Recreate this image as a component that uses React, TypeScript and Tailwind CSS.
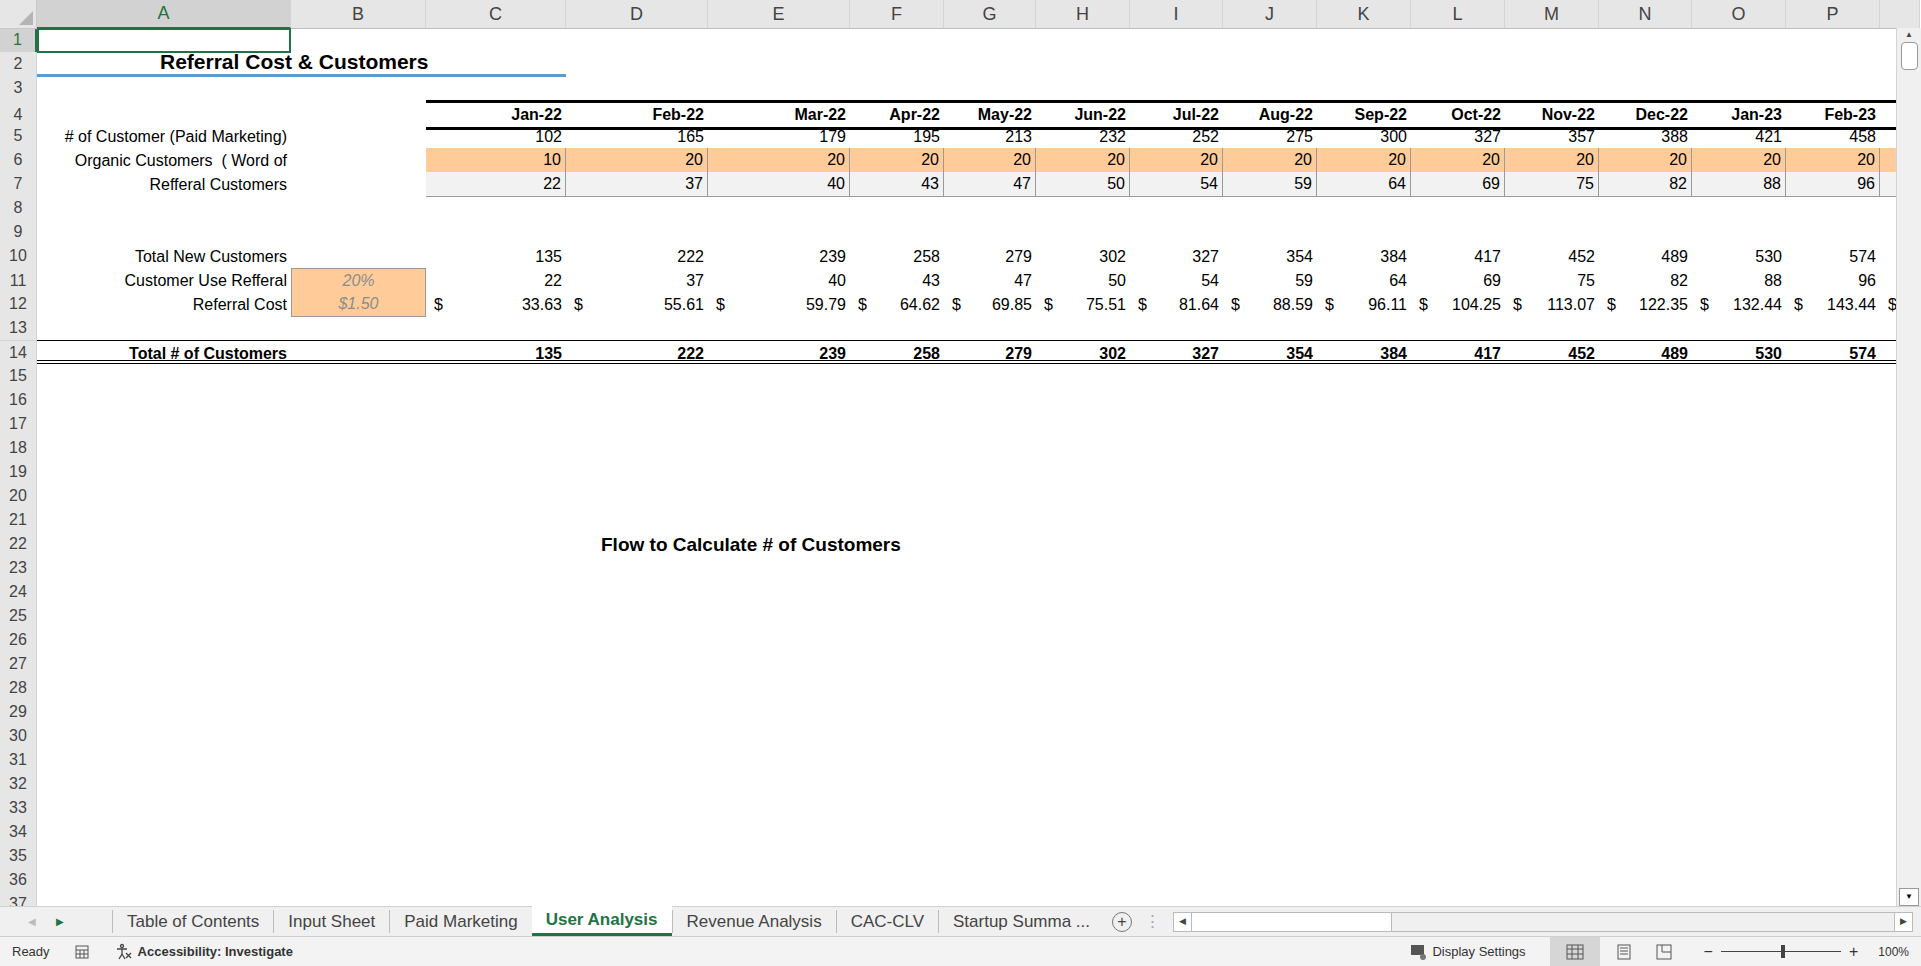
import React from "react";

const cols = ["A", "B", "C", "D", "E", "F", "G", "H", "I", "J", "K", "L", "M", "N", "O", "P", ""];
const template = "37px 254px 135px 140px 142px 142px 94px 92px 94px 93px 94px 94px 94px 94px 93px 94px 94px 40px";

const months = ["Jan-22", "Feb-22", "Mar-22", "Apr-22", "May-22", "Jun-22", "Jul-22", "Aug-22", "Sep-22", "Oct-22", "Nov-22", "Dec-22", "Jan-23", "Feb-23"];
const paid = [102, 165, 179, 195, 213, 232, 252, 275, 300, 327, 357, 388, 421, 458];
const organic = [10, 20, 20, 20, 20, 20, 20, 20, 20, 20, 20, 20, 20, 20];
const referral = [22, 37, 40, 43, 47, 50, 54, 59, 64, 69, 75, 82, 88, 96];
const total = [135, 222, 239, 258, 279, 302, 327, 354, 384, 417, 452, 489, 530, 574];
const cost = ["33.63", "55.61", "59.79", "64.62", "69.85", "75.51", "81.64", "88.59", "96.11", "104.25", "113.07", "122.35", "132.44", "143.44"];

const font = { fontFamily: '"Liberation Sans", Arial, sans-serif' };

function RowHead({ n, sel }: { n: number; sel?: boolean }) {
  return (
    <div
      className={`flex items-center justify-center text-[16px] border-r border-b border-[#d4d4d4] ${
        sel ? "bg-[#d2d2d2] text-[#217346] border-r-2 border-r-[#217346]" : "bg-[#e6e6e6] text-[#444]"
      }`}
    >
      {n}
    </div>
  );
}

function Label({ children, bold }: { children: React.ReactNode; bold?: boolean }) {
  return (
    <div className={`flex items-center justify-end pr-1 whitespace-nowrap ${bold ? "font-bold" : ""}`}>{children}</div>
  );
}

function Empty({ n = 1, cls = "" }: { n?: number; cls?: string }) {
  return (
    <>
      {Array.from({ length: n }).map((_, i) => (
        <div key={i} className={cls} />
      ))}
    </>
  );
}

function Nums({ vals, cls = "", bold }: { vals: (string | number)[]; cls?: string; bold?: boolean }) {
  return (
    <>
      {vals.map((v, i) => (
        <div key={i} className={`flex items-center justify-end pr-1 ${bold ? "font-bold" : ""} ${cls}`}>
          {v}
        </div>
      ))}
    </>
  );
}

function Row({ children, cls = "" }: { children: React.ReactNode; cls?: string }) {
  return (
    <div className={`grid h-[24px] ${cls}`} style={{ gridTemplateColumns: template }}>
      {children}
    </div>
  );
}

export default function App() {
  const rows: React.ReactNode[] = [];
  for (let n = 1; n <= 37; n++) {
    let content: React.ReactNode = <Empty n={17} />;
    if (n === 1)
      content = (
        <>
          <div className="border-2 border-[#217346]" />
          <Empty n={16} />
        </>
      );
    if (n === 2)
      content = (
        <>
          <div className="col-span-3 relative border-b-[3px] border-[#5b9bd5]">
            <span className="absolute left-[123px] -top-[6px] text-[21px] font-bold whitespace-nowrap">Referral Cost &amp; Customers</span>
          </div>
          <Empty n={14} />
        </>
      );
    if (n === 4)
      content = (
        <>
          <Empty n={2} />
          {months.map((m) => (
            <div key={m} className="flex items-end justify-end pr-1 font-bold border-t-[3px] border-b-[3px] border-black">
              {m}
            </div>
          ))}
          <div className="border-t-[3px] border-b-[3px] border-black" />
        </>
      );
    if (n === 5)
      content = (
        <>
          <Label># of Customer (Paid Marketing)</Label>
          <Empty />
          <Nums vals={paid} />
          <Empty />
        </>
      );
    if (n === 6)
      content = (
        <>
          <Label>Organic Customers &nbsp;( Word of</Label>
          <Empty />
          <Nums vals={organic} cls="bg-[#ffcc99] border-r border-b border-[#9a9a9a] first:border-l" />
          <div className="bg-[#ffcc99] border-b border-[#9a9a9a]" />
        </>
      );
    if (n === 7)
      content = (
        <>
          <Label>Refferal Customers</Label>
          <Empty />
          <Nums vals={referral} cls="bg-[#f2f2f2] border-r border-b border-[#9a9a9a]" />
          <div className="bg-[#f2f2f2] border-b border-[#9a9a9a]" />
        </>
      );
    if (n === 10)
      content = (
        <>
          <Label>Total New Customers</Label>
          <Empty />
          <Nums vals={total} />
          <Empty />
        </>
      );
    if (n === 11)
      content = (
        <>
          <Label>Customer Use Refferal</Label>
          <div className="flex items-center justify-center italic text-[#8c8c8c] bg-[#ffcc99] border border-[#9a9a9a]">20%</div>
          <Nums vals={referral} />
          <Empty />
        </>
      );
    if (n === 12)
      content = (
        <>
          <Label>Referral Cost</Label>
          <div className="flex items-center justify-center italic text-[#8c8c8c] bg-[#ffcc99] border border-t-0 border-[#9a9a9a]">$1.50</div>
          {cost.map((c, i) => (
            <div key={i} className="flex items-center justify-between pl-2 pr-1">
              <span>$</span>
              <span>{c}</span>
            </div>
          ))}
          <div className="flex items-center pl-2">$</div>
        </>
      );
    if (n === 14)
      content = (
        <>
          <Label bold>Total # of Customers</Label>
          <div />
          <Nums vals={total} bold />
          <Empty />
        </>
      );
    if (n === 22)
      content = (
        <>
          <Empty n={3} />
          <div className="relative">
            <span className="absolute left-[35px] -top-[1px] text-[19px] font-bold whitespace-nowrap">Flow to Calculate # of Customers</span>
          </div>
          <Empty n={13} />
        </>
      );
    const cls =
      n === 14 ? "border-t border-b-[4px] border-b-black border-t-black [border-bottom-style:double]" : "";
    rows.push(
      <Row key={n} cls={cls}>
        <RowHead n={n} sel={n === 1} />
        {content}
      </Row>
    );
  }

  return (
    <div className="w-[1921px] h-[966px] overflow-hidden bg-white text-[16px] text-black relative" style={font}>
      {/* column headers */}
      <div className="flex">
        <div className="grid h-[28px] flex-1" style={{ gridTemplateColumns: template }}>
          <div className="bg-[#e6e6e6] border-r border-b border-[#c8c8c8] relative">
            <div className="absolute right-[3px] bottom-[3px] w-0 h-0 border-l-[14px] border-l-transparent border-b-[14px] border-b-[#b4b4b4]" />
          </div>
          {cols.map((c, i) => (
            <div
              key={i}
              className={`flex items-center justify-center text-[18px] border-r border-[#d4d4d4] ${
                i === 0 ? "bg-[#d2d2d2] text-[#217346] border-b-2 border-b-[#217346]" : "bg-[#e6e6e6] text-[#444] border-b border-b-[#bdbdbd]"
              }`}
            >
              {c}
            </div>
          ))}
          <div className="bg-[#e6e6e6] border-b border-[#bdbdbd]" />
        </div>
      </div>

      <div className="flex h-[878px]">
        <div className="flex-1 overflow-hidden">{rows}</div>
        <div className="w-[25px] bg-[#f0f0f0] border-l border-[#d4d4d4] flex flex-col items-center">
          <div className="h-[14px] text-[8px] leading-[14px] text-[#444]">▲</div>
          <div className="w-[17px] h-[28px] bg-white border border-[#999] rounded-sm" />
          <div className="flex-1" />
          <div className="w-[20px] h-[18px] bg-white border border-[#999] text-[8px] text-center leading-[16px]">▼</div>
        </div>
      </div>

      {/* sheet tabs */}
      <div className="h-[30px] bg-[#f0f0f0] border-t border-[#d0d0d0] flex items-stretch text-[17px] text-[#444]">
        <div className="w-[112px] flex items-center gap-5 pl-7 text-[10px]">
          <span className="text-[#bbb]">◀</span>
          <span className="text-[#217346]">▶</span>
        </div>
        {["Table of Contents", "Input Sheet", "Paid Marketing", "User Analysis", "Revenue Analysis", "CAC-CLV", "Startup Summa ..."].map((t) => (
          <div
            key={t}
            className={`flex items-center px-[14px] ${
              t === "User Analysis"
                ? "bg-white text-[#217346] font-bold border-b-[3px] border-[#217346] -mt-px"
                : "border-l border-[#bdbdbd] my-[3px]"
            }`}
          >
            {t}
          </div>
        ))}
        <div className="flex items-center px-2">
          <span className="w-[20px] h-[20px] rounded-full border border-[#777] flex items-center justify-center text-[16px] leading-none">+</span>
        </div>
        <div className="flex items-center text-[#aaa] px-1">⋮</div>
        <div className="flex items-center ml-2 flex-1 pr-[8px]">
          <div className="flex-1 h-[20px] border border-[#bbb] bg-[#f0f0f0] flex">
            <div className="w-[18px] bg-white text-[9px] flex items-center justify-center border-r border-[#bbb]">◀</div>
            <div className="w-[200px] bg-white border-r border-[#bbb]" />
            <div className="flex-1" />
            <div className="w-[18px] bg-white text-[9px] flex items-center justify-center border-l border-[#bbb]">▶</div>
          </div>
        </div>
      </div>

      {/* status bar */}
      <div className="h-[30px] bg-[#f3f3f3] border-t border-[#d0d0d0] flex items-center text-[13px] text-[#333]">
        <span className="pl-3">Ready</span>
        <svg className="ml-6" width="16" height="16" viewBox="0 0 16 16" fill="none" stroke="#555">
          <rect x="2" y="2" width="12" height="12" />
          <path d="M2 6h12M6 6v8M10 6v8M2 10h12" />
        </svg>
        <svg className="ml-6" width="20" height="18" viewBox="0 0 20 18" fill="none" stroke="#444" strokeWidth="1.3">
          <circle cx="8" cy="3" r="1.5" />
          <path d="M3 6h10M8 6v5l-3 5M8 11l3 5" />
          <path d="M12 10l5 5M17 10l-5 5" />
        </svg>
        <span className="ml-1 font-bold">Accessibility: Investigate</span>
        <div className="flex-1" />
        <svg width="18" height="18" viewBox="0 0 18 18" fill="#555">
          <rect x="1" y="2" width="13" height="10" />
          <circle cx="13" cy="14" r="3" fill="#777" />
        </svg>
        <span className="ml-1">Display Settings</span>
        <div className="ml-6 w-[50px] h-[30px] bg-[#d6d6d6] flex items-center justify-center">
          <svg width="18" height="16" viewBox="0 0 18 16" fill="none" stroke="#555">
            <rect x="1" y="1" width="16" height="14" />
            <path d="M1 5h16M1 10h16M6 1v14M12 1v14" />
          </svg>
        </div>
        <svg className="ml-4" width="16" height="16" viewBox="0 0 16 16" fill="none" stroke="#555">
          <rect x="2" y="1" width="12" height="14" />
          <path d="M4 4h8M4 7h8M4 10h8" />
        </svg>
        <svg className="ml-6" width="16" height="16" viewBox="0 0 16 16" fill="none" stroke="#555">
          <rect x="1" y="1" width="14" height="14" />
          <path d="M6 1v7h9" />
        </svg>
        <span className="ml-8 text-[16px]">−</span>
        <div className="ml-2 w-[120px] h-px bg-[#444] relative">
          <div className="absolute left-[60px] -top-[6px] w-[4px] h-[13px] bg-[#444]" />
        </div>
        <span className="ml-2 text-[16px]">+</span>
        <span className="ml-5 pr-3 text-[12px]">100%</span>
      </div>
    </div>
  );
}
